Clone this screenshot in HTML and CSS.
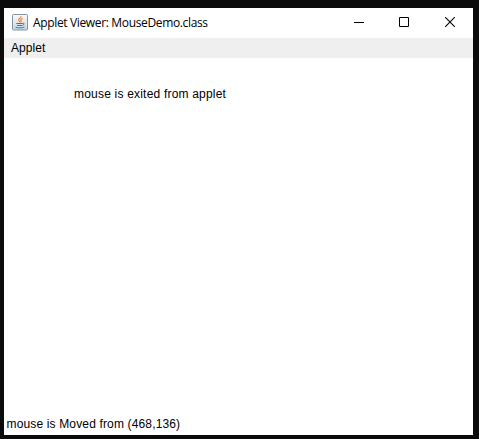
FILE: index.html
```html
<!DOCTYPE html>
<html lang="en">
<head>
<meta charset="utf-8">
<title>Applet Viewer: MouseDemo.class</title>
<link rel="stylesheet" href="styles.css">
</head>
<body>
<main class="window">
  <header class="titlebar">
    <svg class="app-icon" width="16" height="17" viewBox="0 0 16 17" fill="none">
      <defs>
        <linearGradient id="tile" x1="0" y1="0" x2="0" y2="1">
          <stop offset="0" stop-color="#f8fafb"/>
          <stop offset="1" stop-color="#c9d8e3"/>
        </linearGradient>
      </defs>
      <rect x=".5" y=".5" width="15" height="15.5" rx="1" fill="url(#tile)" stroke="#8295a3"/>
      <path d="M9 2.200c.4 1.900-3 2.300-2.300 4.200.2.700 1 1.100 1.100 1.900M10.800 4.400c-1.800.7-2.700 1.500-1.900 2.500.5.600.3 1.100-.2 1.500" stroke="#ee8a3c" stroke-width="1.200"/>
      <path d="M4.300 9.500h6.400M5 11.500h5M10.700 9.300c2-.6 2.100 1.400-.2 1.900M3.500 13.300c2.600.8 6.600.8 9-.2" stroke="#4c7299" stroke-width="1"/>
    </svg>
    <h1 class="title">Applet Viewer: MouseDemo.class</h1>
    <div class="controls">
      <svg class="minimize" width="11" height="11" viewBox="0 0 11 11"><path d="M0 5.500H10" stroke="#000"/></svg>
      <svg width="11" height="11" viewBox="0 0 11 11"><path d="M.5.5h9v9h-9z" fill="none" stroke="#000"/></svg>
      <svg width="11" height="11" viewBox="0 0 11 11"><path d="M.2.200l9.600 9.600M9.800.2L.2 9.800" stroke="#000" stroke-width="1.100"/></svg>
    </div>
  </header>
  <nav class="menubar"><span class="menu">Applet</span></nav>
  <section class="canvas"><p class="message">mouse is exited from applet</p></section>
  <footer class="status">mouse is Moved from (468,136)</footer>
</main>
</body>
</html>
```
FILE: styles.css
```css
* {
  box-sizing: border-box;
  margin: 0;
}

body {
  height: 439px;
  padding: 8px 6px 4px 4px;
  overflow: hidden;
  background: #0b0b0b;
  color: #000;
  font: 12px/16px "Liberation Sans", Arial, sans-serif;
}

.window {
  display: flex;
  flex-direction: column;
  height: 427px;
  background: #fff;
}

.titlebar {
  display: flex;
  align-items: flex-start;
  height: 30px;
  padding: 6px 17px 0 8px;
}

.title {
  margin: 1px 0 0 5px;
  font: 400 12px/16px "Open Sans", "Noto Sans", sans-serif;
  letter-spacing: -0.35px;
  white-space: nowrap;
}

.controls {
  display: flex;
  gap: 35px;
  margin: 3px 0 0 auto;
}

.controls svg {
  display: block;
}

.controls .minimize {
  margin-right: -1px;
}

.menubar {
  height: 20px;
  padding: 2px 7px;
  background: #efefef;
}

.menu {
  display: block;
  letter-spacing: 0.05px;
}

.canvas {
  flex: 1;
  padding: 28px 0 0 70px;
}

.message {
  letter-spacing: 0.2px;
}

.status {
  padding: 0 2.500px 3px;
  letter-spacing: 0.15px;
}
```
